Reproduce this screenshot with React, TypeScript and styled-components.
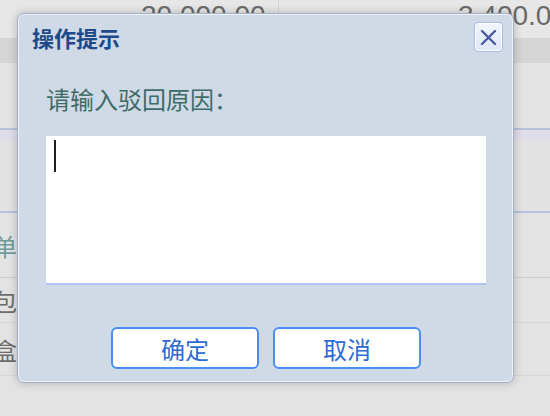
import React from "react";
import styled, { createGlobalStyle } from "styled-components";

const Global = createGlobalStyle`
  html, body { margin: 0; padding: 0; }
  body {
    width: 550px;
    height: 416px;
    overflow: hidden;
    background: #e3e3e3;
    font-family: "Noto Sans CJK SC", "Liberation Sans", sans-serif;
  }
`;

const Page = styled.div`
  position: relative;
  width: 550px;
  height: 416px;
  overflow: hidden;
  background: #e3e3e3;
`;

const TopStrip = styled.div`
  display: flex;
  height: 38px;
  background: #e7e7e7;
  overflow: hidden;
`;

const AmountCell = styled.div<{ $w?: number; $pl?: number }>`
  flex: ${(p) => (p.$w ? `0 0 ${p.$w}px` : "1 1 auto")};
  box-sizing: border-box;
  padding-left: ${(p) => p.$pl ?? 0}px;
  border-right: ${(p) => (p.$w ? "1px solid #d2d2d2" : "none")};
  font-family: "Liberation Sans", Arial, sans-serif;
  font-size: 28px;
  color: #6a6a6a;
  white-space: nowrap;
  overflow: hidden;
`;

const Band = styled.div<{ $h: number; $bg: string; $line?: string }>`
  height: ${(p) => p.$h}px;
  background: ${(p) => p.$bg};
  border-bottom: ${(p) => (p.$line ? `${p.$line}` : "none")};
`;

const Row = styled.div<{ $h: number; $color: string; $line: string }>`
  display: flex;
  align-items: center;
  height: ${(p) => p.$h}px;
  border-bottom: 1px solid ${(p) => p.$line};
  font-size: 24px;
  color: ${(p) => p.$color};
  text-indent: -7px;
  white-space: nowrap;
`;

const Dialog = styled.div`
  position: absolute;
  left: 17px;
  top: 13px;
  width: 497px;
  height: 370px;
  box-sizing: border-box;
  display: flex;
  flex-direction: column;
  background: #d0dae6;
  border: 1px solid #a3b0c6;
  border-radius: 7px;
  box-shadow: inset 0 0 0 1px #edf2f9, 0 0 10px rgba(0, 0, 0, 0.22);
`;

const Header = styled.div`
  display: flex;
  align-items: center;
  justify-content: space-between;
  padding: 8px 10px 0 14px;
`;

const Title = styled.div`
  font-size: 22px;
  font-weight: 700;
  color: #1f4a8a;
  line-height: 30px;
`;

const CloseBtn = styled.div`
  width: 29px;
  height: 30px;
  box-sizing: border-box;
  border: 1px solid #a4bde6;
  border-radius: 4px;
  background: linear-gradient(#f2f6fd, #dde7f6);
  box-shadow: inset 0 0 0 1px #ffffff;
  display: flex;
  align-items: center;
  justify-content: center;
`;

const Body = styled.div`
  display: flex;
  flex-direction: column;
  padding: 0 27px 0 28px;
`;

const Label = styled.div`
  margin-top: 31px;
  font-size: 24px;
  line-height: 32px;
  color: #3e6c69;
`;

const TextBox = styled.div`
  margin-top: 21px;
  height: 149px;
  box-sizing: border-box;
  background: #ffffff;
  border-bottom: 2px solid #aec4f2;
  padding: 4px 0 0 8px;
`;

const Caret = styled.div`
  width: 2px;
  height: 32px;
  background: #1e1e1e;
`;

const Buttons = styled.div`
  display: flex;
  justify-content: center;
  gap: 14px;
  margin-top: 42px;
`;

const Button = styled.div`
  width: 148px;
  height: 42px;
  box-sizing: border-box;
  border: 2px solid #4a8ef2;
  border-radius: 6px;
  background: #ffffff;
  display: flex;
  align-items: center;
  justify-content: center;
  font-size: 24px;
  color: #2d6bd2;
`;

export default function App() {
  return (
    <>
      <Global />
      <Page>
        <TopStrip>
          <AmountCell $w={279} $pl={141}>20,000.00</AmountCell>
          <AmountCell $pl={179}>3,400.00</AmountCell>
        </TopStrip>
        <Band $h={25} $bg="#d5d5d5" />
        <Band $h={65} $bg="#e3e3e3" $line="2px solid #b5c2da" />
        <Band $h={11} $bg="#e1dce9" />
        <Band $h={70} $bg="#e2e2e2" $line="2px solid #b5c2da" />
        <Row $h={64} $color="#6f9c9a" $line="#cdcdcd">单</Row>
        <Row $h={44} $color="#6d6d6d" $line="#d6d6d6">包</Row>
        <Row $h={52} $color="#6d6d6d" $line="#d6d6d6">盒</Row>

        <Dialog>
          <Header>
            <Title>操作提示</Title>
            <CloseBtn>
              <svg width="17" height="17" viewBox="0 0 17 17">
                <path d="M2 2 L15 15 M15 2 L2 15" stroke="#4a5aa0" strokeWidth="2.4" strokeLinecap="round" />
              </svg>
            </CloseBtn>
          </Header>
          <Body>
            <Label>请输入驳回原因：</Label>
            <TextBox>
              <Caret />
            </TextBox>
            <Buttons>
              <Button>确定</Button>
              <Button>取消</Button>
            </Buttons>
          </Body>
        </Dialog>
      </Page>
    </>
  );
}
